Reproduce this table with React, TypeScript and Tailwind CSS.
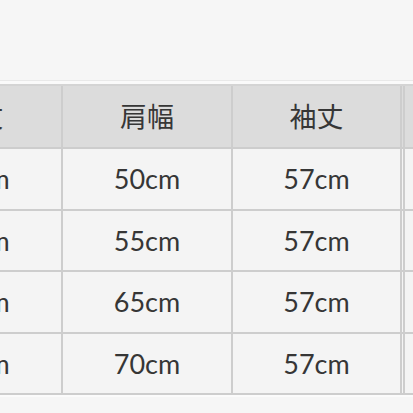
import React from "react";

const font = { fontFamily: "Lato, 'Noto Sans CJK JP', sans-serif" };

const header = ["着丈", "肩幅", "袖丈", "", "身幅"];
const rows = [
  ["68cm", "50cm", "57cm", "", "52cm"],
  ["70cm", "55cm", "57cm", "", "55cm"],
  ["72cm", "65cm", "57cm", "", "58cm"],
  ["74cm", "70cm", "57cm", "", "61cm"],
];
const widths = ["w-[171px]", "w-[170px]", "w-[169px]", "w-[3px]", "w-[170px]"];

function Row({ cells, head }: { cells: string[]; head?: boolean }) {
  return (
    <div
      className={
        "flex shrink-0 border-b-2 border-[#cdcdcd] " +
        (head ? "h-[63px] bg-[#dcdcdc]" : "h-[61.5px] bg-[#f4f4f4]")
      }
    >
      {cells.map((c, i) => (
        <div
          key={i}
          className={
            widths[i] +
            " flex shrink-0 items-center justify-center border-r-2 border-[#cdcdcd] text-[27px] leading-none text-[#363636]"
          }
        >
          {c}
        </div>
      ))}
    </div>
  );
}

export default function App() {
  return (
    <div className="h-[413px] w-[413px] overflow-hidden bg-[#f6f6f6]" style={font}>
      <div className="h-[80px]" />
      <div className="h-px bg-[#e9e9e9]" />
      <div className="h-[3px] bg-[#fafafa]" />
      <div className="ml-[-108px] flex w-[700px] flex-col border-t-2 border-[#d4d4d4]">
        <Row cells={header} head />
        {rows.map((r, i) => (
          <Row key={i} cells={r} />
        ))}
      </div>
      <div className="h-[2px] bg-[#fbfbfb]" />
    </div>
  );
}
